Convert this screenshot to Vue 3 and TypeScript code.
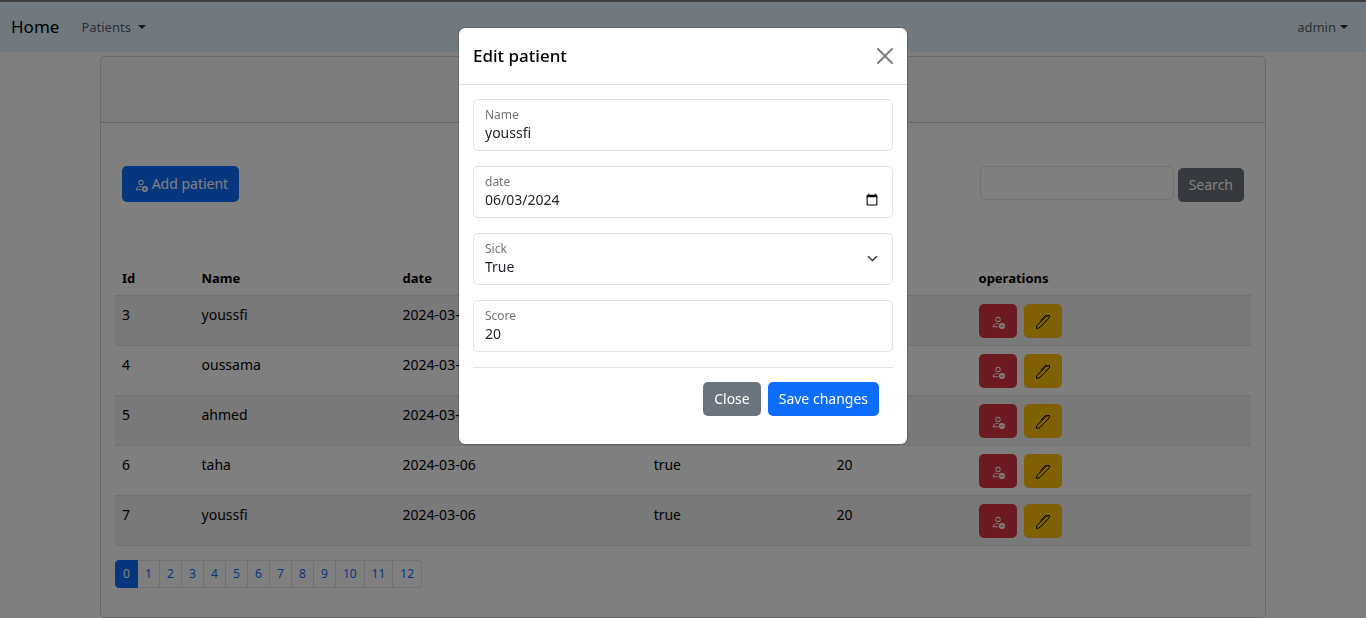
<script setup lang="ts">
import { ref } from 'vue'

interface Patient {
  id: number
  name: string
  date: string
  sick: string
  score: number
}

const patients: Patient[] = [
  { id: 3, name: 'youssfi', date: '2024-03-06', sick: 'true', score: 20 },
  { id: 4, name: 'oussama', date: '2024-03-06', sick: 'true', score: 20 },
  { id: 5, name: 'ahmed', date: '2024-03-06', sick: 'true', score: 20 },
  { id: 6, name: 'taha', date: '2024-03-06', sick: 'true', score: 20 },
  { id: 7, name: 'youssfi', date: '2024-03-06', sick: 'true', score: 20 },
]

const pages = Array.from({ length: 13 }, (_, i) => i)
const currentPage = ref(0)
const modalOpen = ref(true)
const keyword = ref('')
const form = ref({ name: 'youssfi', date: '2024-06-03', sick: 'True', score: '20' })
</script>

<template>
  <div class="page">
    <nav class="navbar">
      <a class="brand" href="#">Home</a>
      <a class="nav-link" href="#">Patients<span class="caret wide"></span></a>
      <a class="nav-link user" href="#">admin<span class="caret"></span></a>
    </nav>

    <main class="card">
      <div class="card-header"></div>
      <div class="card-body">
        <div class="toolbar">
          <button class="btn primary add" type="button">
            <svg class="icon" viewBox="0 0 16 16" aria-hidden="true">
              <path d="M12.5 16a3.5 3.5 0 1 0 0-7 3.5 3.5 0 0 0 0 7m.5-5v1h1a.5.5 0 0 1 0 1h-1v1a.5.5 0 0 1-1 0v-1h-1a.5.5 0 0 1 0-1h1v-1a.5.5 0 0 1 1 0m-2-6a3 3 0 1 1-6 0 3 3 0 0 1 6 0M8 7a2 2 0 1 0 0-4 2 2 0 0 0 0 4" />
              <path d="M8.256 14a4.5 4.5 0 0 1-.229-1.004H3c.001-.246.154-.986.832-1.664C4.484 10.68 5.711 10 8 10q.39 0 .74.025c.226-.341.496-.65.804-.918Q8.844 9.002 8 9c-5 0-6 3-6 4s1 1 1 1z" />
            </svg>
            Add patient
          </button>
          <form class="search" @submit.prevent>
            <input v-model="keyword" class="search-input" type="text" aria-label="Search" />
            <button class="btn secondary" type="submit">Search</button>
          </form>
        </div>

        <table class="table">
          <colgroup>
            <col class="c-id" /><col class="c-name" /><col class="c-date" />
            <col class="c-sick" /><col class="c-score" /><col />
          </colgroup>
          <thead>
            <tr>
              <th>Id</th><th>Name</th><th>date</th><th>sick</th><th>score</th><th>operations</th>
            </tr>
          </thead>
          <tbody>
            <tr v-for="p in patients" :key="p.id">
              <td>{{ p.id }}</td>
              <td>{{ p.name }}</td>
              <td>{{ p.date }}</td>
              <td>{{ p.sick }}</td>
              <td>{{ p.score }}</td>
              <td>
                <div class="ops">
                  <button class="btn danger" type="button" aria-label="Delete">
                    <svg class="icon" viewBox="0 0 16 16" aria-hidden="true">
                      <path d="M12.5 16a3.5 3.5 0 1 0 0-7 3.5 3.5 0 0 0 0 7M11 12h3a.5.5 0 0 1 0 1h-3a.5.5 0 0 1 0-1m0-7a3 3 0 1 1-6 0 3 3 0 0 1 6 0M8 7a2 2 0 1 0 0-4 2 2 0 0 0 0 4" />
                      <path d="M8.256 14a4.5 4.5 0 0 1-.229-1.004H3c.001-.246.154-.986.832-1.664C4.484 10.68 5.711 10 8 10q.39 0 .74.025c.226-.341.496-.65.804-.918Q8.844 9.002 8 9c-5 0-6 3-6 4s1 1 1 1z" />
                    </svg>
                  </button>
                  <button class="btn warning" type="button" aria-label="Edit">
                    <svg class="icon pen" viewBox="0 0 14 14" aria-hidden="true">
                      <path d="M.6 13.4V10.8L9.5 2Q10.8.8 12 .6H13.4V2.6L4.2 12.2 1.8 13.4Z" />
                      <path d="M11 .7H9.2L4.8 5.4" />
                    </svg>
                  </button>
                </div>
              </td>
            </tr>
          </tbody>
        </table>

        <ul class="pagination">
          <li v-for="n in pages" :key="n">
            <a class="page-link" :class="{ active: n === currentPage }" href="#" @click.prevent="currentPage = n">{{ n }}</a>
          </li>
        </ul>
      </div>
    </main>

    <div v-if="modalOpen" class="backdrop">
      <div class="modal" role="dialog" aria-modal="true" aria-labelledby="modal-title">
        <header class="modal-header">
          <h5 id="modal-title" class="modal-title">Edit patient</h5>
          <button class="close" type="button" aria-label="Close dialog" @click="modalOpen = false">
            <svg viewBox="0 0 16 16" aria-hidden="true">
              <path d="M.293.293a1 1 0 0 1 1.414 0L8 6.586 14.293.293a1 1 0 1 1 1.414 1.414L9.414 8l6.293 6.293a1 1 0 0 1-1.414 1.414L8 9.414l-6.293 6.293a1 1 0 0 1-1.414-1.414L6.586 8 .293 1.707a1 1 0 0 1 0-1.414" />
            </svg>
          </button>
        </header>
        <form class="modal-body" @submit.prevent>
          <div class="field">
            <label for="name">Name</label>
            <input id="name" v-model="form.name" type="text" />
          </div>
          <div class="field">
            <label for="date">date</label>
            <input id="date" v-model="form.date" type="date" />
          </div>
          <div class="field">
            <label for="sick">Sick</label>
            <select id="sick" v-model="form.sick">
              <option>True</option>
              <option>False</option>
            </select>
            <svg class="chevron" viewBox="0 0 16 16" aria-hidden="true"><path d="m2 5 6 6 6-6" /></svg>
          </div>
          <div class="field">
            <label for="score">Score</label>
            <input id="score" v-model="form.score" type="text" />
          </div>
          <footer class="modal-footer">
            <button class="btn secondary" type="button" @click="modalOpen = false">Close</button>
            <button class="btn primary" type="submit">Save changes</button>
          </footer>
        </form>
      </div>
    </div>
  </div>
</template>

<style>
body {
  margin: 0;
  background: #fff;
}
</style>

<style scoped>
.page,
.page * {
  box-sizing: border-box;
}
.page {
  font-family: "Noto Sans", "Open Sans", sans-serif;
  font-size: 14px;
  line-height: 22px;
  color: #212529;
}
button,
input,
select {
  font: inherit;
  color: inherit;
}
.navbar {
  display: flex;
  align-items: center;
  height: 52px;
  padding: 0 18px 0 11px;
  border-top: 2px solid #808080;
  background: #e3f2fd;
}
.brand {
  margin-right: 22px;
  font-size: 17px;
  color: #000;
  text-decoration: none;
}
.nav-link {
  display: flex;
  align-items: center;
  font-size: 13px;
  color: rgba(0, 0, 0, 0.65);
  text-decoration: none;
}
.user {
  margin-left: auto;
}
.caret {
  margin-left: 4px;
  border: 4px solid transparent;
  border-top-color: rgba(0, 0, 0, 0.8);
  border-bottom: 0;
}
.caret.wide {
  margin-left: 7px;
}
.card {
  max-width: 1166px;
  margin: 4px auto 0;
  border: 1px solid rgba(0, 0, 0, 0.175);
  border-radius: 5px;
}
.card-header {
  height: 66px;
  border-bottom: 1px solid rgba(0, 0, 0, 0.175);
  background: rgba(33, 37, 41, 0.03);
}
.card-body {
  padding: 14px 14px 29px;
}
.toolbar {
  display: flex;
  justify-content: space-between;
  padding: 29px 7px 57px;
}
.btn {
  height: 34px;
  padding: 0 11px;
  border: 0;
  border-radius: 5px;
  line-height: 22px;
  color: #fff;
  cursor: pointer;
  white-space: nowrap;
}
.primary {
  background: #0d6efd;
}
.secondary {
  background: #6c757d;
}
.danger {
  background: #dc3545;
}
.warning {
  background: #ffc107;
  color: #000;
}
.add {
  height: 36px;
  padding: 0 11px 0 12px;
}
.icon {
  width: 14px;
  height: 14px;
  vertical-align: -3px;
  fill: currentColor;
}
.pen {
  fill: none;
  stroke: currentColor;
}
.search {
  display: flex;
  align-items: flex-end;
  gap: 4px;
}
.search-input {
  align-self: flex-start;
  width: 194px;
  height: 34px;
  padding: 0 11px;
  border: 1px solid #dee2e6;
  border-radius: 5px;
  background: #fff;
}
.table {
  width: 100%;
  table-layout: fixed;
  border-spacing: 0;
  color: #000;
}
.c-id {
  width: 7%;
}
.c-name {
  width: 17.7%;
}
.c-date {
  width: 22.1%;
}
.c-sick {
  width: 16.1%;
}
.c-score {
  width: 12.5%;
}
.table th,
.table td {
  border-bottom: 1px solid #dee2e6;
  text-align: left;
  vertical-align: top;
}
.table th {
  padding: 8px 7px 6px;
  font-size: 13px;
  font-weight: 700;
}
.table td {
  padding: 8px 7px 7px;
}
.table tbody tr:nth-child(odd) td {
  background: rgba(0, 0, 0, 0.05);
}
.ops {
  display: flex;
  gap: 7px;
}
.ops .btn {
  width: 38px;
}
.pagination {
  display: flex;
  margin: 14px 0 0;
  padding: 0;
  list-style: none;
}
.page-link {
  display: block;
  min-width: 22px;
  padding: 3px 7px;
  border: 1px solid #dee2e6;
  border-left-width: 0;
  font-size: 12px;
  line-height: 20px;
  text-align: center;
  color: #0d6efd;
  text-decoration: none;
}
.page-link.active {
  border-color: #0d6efd;
  background: #0d6efd;
  color: #fff;
}
.pagination li:first-child .page-link {
  border-left-width: 1px;
  border-radius: 4px 0 0 4px;
}
.pagination li:last-child .page-link {
  border-radius: 0 4px 4px 0;
}
.backdrop {
  position: fixed;
  inset: 0;
  padding: 27px 8px;
  overflow: auto;
  background: rgba(0, 0, 0, 0.5);
}
.modal {
  max-width: 450px;
  margin: 0 auto;
  border: 1px solid rgba(0, 0, 0, 0.175);
  border-radius: 7px;
  background: #fff;
  background-clip: padding-box;
}
.modal-header {
  display: flex;
  align-items: center;
  justify-content: space-between;
  padding: 14px;
  border-bottom: 1px solid #dee2e6;
}
.modal-title {
  margin: 0;
  font-size: 17px;
  font-weight: 500;
  line-height: 28px;
  color: #000;
}
.close {
  display: flex;
  padding: 0;
  border: 0;
  background: none;
  opacity: 0.5;
  cursor: pointer;
}
.close svg {
  width: 16px;
  height: 16px;
}
.modal-body {
  display: flex;
  flex-direction: column;
  gap: 15px;
  padding: 14px;
}
.field {
  position: relative;
  display: flex;
  flex-direction: column;
  height: 52px;
  padding: 7px 11px;
  border: 1px solid #dee2e6;
  border-radius: 5px;
}
.field label {
  font-size: 12px;
  line-height: 16px;
  color: rgba(33, 37, 41, 0.65);
}
.field input,
.field select {
  width: 100%;
  height: 20px;
  margin: 0;
  padding: 0;
  border: 0;
  outline: 0;
  background: none;
  line-height: 20px;
  appearance: none;
}
.field input::-webkit-datetime-edit,
.field input::-webkit-datetime-edit-fields-wrapper,
.field input::-webkit-datetime-edit-month-field,
.field input::-webkit-datetime-edit-day-field,
.field input::-webkit-datetime-edit-year-field {
  padding: 0;
}
.chevron {
  position: absolute;
  top: 50%;
  right: 14px;
  width: 11px;
  height: 11px;
  margin-top: -6px;
  fill: none;
  stroke: #343a40;
  stroke-width: 2;
  stroke-linecap: round;
  stroke-linejoin: round;
  pointer-events: none;
}
.modal-footer {
  display: flex;
  justify-content: flex-end;
  gap: 7px;
  padding: 14px;
  border-top: 1px solid #dee2e6;
}
</style>
